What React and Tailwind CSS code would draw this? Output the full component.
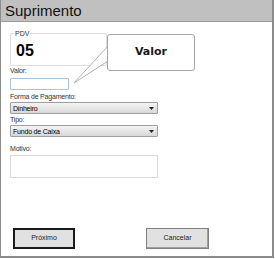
import React from "react";

function Select({ value }) {
  return (
    <div className="w-[148px] h-[12px] border border-[#a0a0a0] rounded-[1px] bg-gradient-to-b from-[#f4f4f4] to-[#d8d8d8] flex items-center justify-between pl-[2px] pr-[3px]">
      <span className="text-[7px] tracking-[-0.2px] leading-none text-black">{value}</span>
      <svg width="5" height="3" viewBox="0 0 5 3">
        <path d="M0 0h5L2.5 3z" fill="#222" />
      </svg>
    </div>
  );
}

function Label({ children, className = "" }) {
  return (
    <div className={`text-[7px] tracking-[-0.2px] leading-[8px] h-[8px] text-[#333] ${className}`}>
      {children}
    </div>
  );
}

export default function App() {
  return (
    <div className="w-[275px] h-[259px] bg-white font-['Liberation_Sans',sans-serif] overflow-hidden">
      <div className="w-[274px] h-[258px] border-l border-r-2 border-b-2 border-[#8c8c8c] flex flex-col">
        {/* Title */}
        <div className="h-[22px] bg-[#c0c0c0] border-b border-[#9a9a9a] flex items-center pl-[4px]">
          <span className="text-[15px] text-[#111] leading-none">Suprimento</span>
        </div>

        {/* Body */}
        <div className="relative flex-1 px-[9px] pt-[11px]">
          {/* PDV box */}
          <div className="relative w-[97px] h-[33px] border border-[#dcdcdc] rounded-[2px]">
            <span className="absolute left-[3px] top-[-4px] bg-white px-[1px] text-[7px] leading-none text-[#333]">
              PDV
            </span>
            <div className="pl-[5px] pt-[9px] text-[16px] font-bold leading-none text-black">05</div>
          </div>

          <Label className="mt-[1px]">Valor:</Label>
          <div className="mt-[3px] w-[59px] h-[12px] border border-[#a9c3de] rounded-[1px]"></div>

          <Label className="mt-[3px]">Forma de Pagamento:</Label>
          <div className="mt-[1px]">
            <Select value="Dinheiro" />
          </div>

          <Label className="mt-[2px]">Tipo:</Label>
          <div className="mt-[1px]">
            <Select value="Fundo de Caixa" />
          </div>

          <Label className="mt-[8px]">Motivo:</Label>
          <div className="mt-[2px] w-[148px] h-[23px] border border-[#dcdcdc]"></div>

          {/* Buttons */}
          <div className="mt-[50px] flex pl-[3px] gap-[71px]">
            <div className="w-[62px] h-[21px] bg-[#e1e1e1] border-2 border-[#1a1a1a] flex items-center justify-center text-[7px] text-[#222]">
              Próximo
            </div>
            <div className="w-[63px] h-[21px] bg-[#e1e1e1] border border-[#808080] shadow-[inset_-1px_-1px_0_#a0a0a0] flex items-center justify-center text-[7px] text-[#222]">
              Cancelar
            </div>
          </div>

          {/* Callout */}
          <svg className="absolute left-[60px] top-[10px]" width="50" height="60" viewBox="0 0 50 60">
            <path d="M47 14 L13 51 L47 29" fill="white" stroke="#a0a0a0" strokeWidth="0.8" />
          </svg>
          <div className="absolute left-[106px] top-[12px] w-[88px] h-[37px] bg-white border border-[#a6a6a6] rounded-[3px] flex items-center justify-center">
            <span className="text-[11px] font-bold text-[#1a1a1a] font-['DejaVu_Sans',sans-serif]">Valor</span>
          </div>
        </div>
      </div>
    </div>
  );
}
